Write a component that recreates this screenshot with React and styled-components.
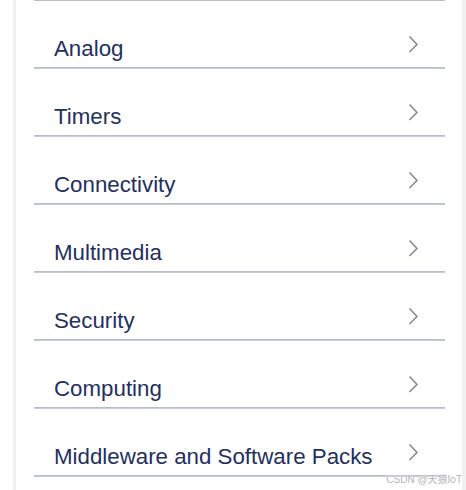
import { styled, createGlobalStyle } from "styled-components";

const GlobalStyle = createGlobalStyle`
  html, body {
    margin: 0;
    padding: 0;
    background: #ffffff;
  }
  body {
    font-family: "Liberation Sans", Arial, sans-serif;
  }
`;

const Page = styled.div`
  position: relative;
  display: flex;
  min-height: 100vh;
  padding-left: 13px;
  overflow: hidden;
`;

const Panel = styled.div`
  width: 453px;
  padding: 0 17px 0 18px;
  box-sizing: border-box;
  border-left: 3px solid #f1f1f1;
  border-right: 4px solid #f1f1f1;
  background: #ffffff;
`;

const List = styled.ul`
  margin: 0;
  padding: 0;
  list-style: none;
  border-top: 1px solid #b8c0c8;
`;

const Row = styled.li`
  display: flex;
  justify-content: space-between;
  height: 66px;
  padding: 0 26px 0 20px;
  border-bottom: 1px solid #b6bfc8;
  box-shadow: 0 1px 0 #c3cbdc;
  margin-bottom: 1px;
  cursor: pointer;
`;

const Label = styled.span`
  align-self: flex-end;
  padding-bottom: 7px;
  color: #23305f;
  font-size: 22.3px;
  line-height: 22px;
`;

const Chevron = styled.svg`
  flex: none;
  margin-top: 34px;
  width: 11px;
  height: 18px;
`;

const Watermark = styled.span`
  position: absolute;
  right: 4px;
  top: 471px;
  font-family: "Liberation Sans", "Noto Sans CJK SC", sans-serif;
  font-size: 10px;
  color: #b4b4b4;
  text-shadow: 0 0 2px #ffffff, 0 0 1px #ffffff;
`;

const categories = [
  "Analog",
  "Timers",
  "Connectivity",
  "Multimedia",
  "Security",
  "Computing",
  "Middleware and Software Packs",
];

const App = () => {
  return (
    <>
      <GlobalStyle />
      <Page>
        <Panel>
          <List>
            {categories.map((name) => (
              <Row key={name}>
                <Label>{name}</Label>
                <Chevron viewBox="0 0 11 18" fill="none">
                  <path
                    d="M1.5 1.5 L9 9.5 L1.5 17"
                    stroke="#8a8a8a"
                    strokeWidth="1.6"
                  />
                </Chevron>
              </Row>
            ))}
          </List>
        </Panel>
        <Watermark>CSDN @天狼IoT</Watermark>
      </Page>
    </>
  );
};

export default App;
